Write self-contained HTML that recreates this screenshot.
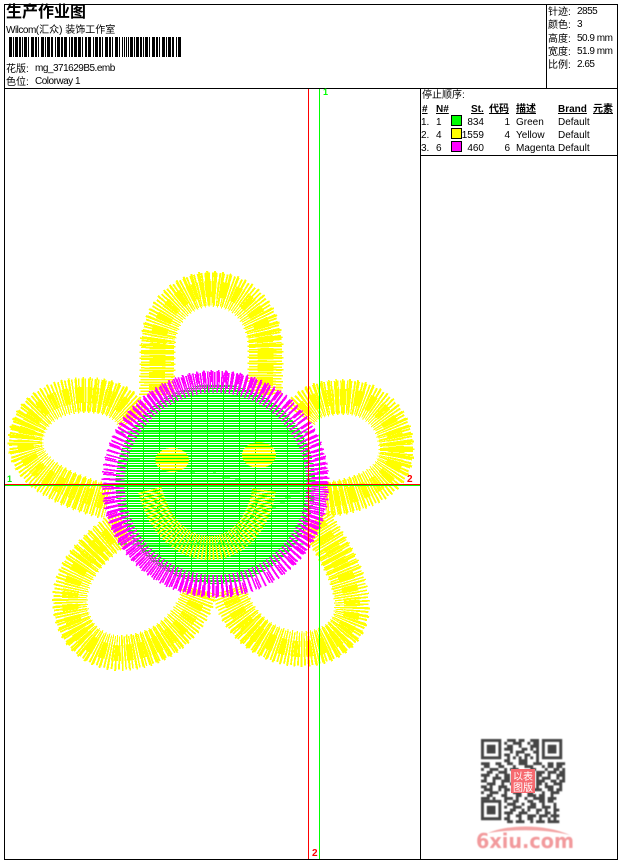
<!DOCTYPE html>
<html lang="zh"><head><meta charset="utf-8"><title>生产作业图</title>
<style>
html,body{margin:0;padding:0;background:#fff}
#p{position:relative;width:620px;height:860px;overflow:hidden;background:#fff;font:10px/12px "Liberation Sans","WenQuanYi Zen Hei","Noto Sans CJK SC",sans-serif;color:#000}
#p div{position:absolute;white-space:nowrap}
.l{position:absolute;background:#000}
.b{font-weight:bold;text-decoration:underline}
.s{width:9px;height:9px;border:1px solid #000}
.r{text-align:right}
.n{letter-spacing:-.5px}
svg{position:absolute;left:0;top:0}
</style></head><body><div id="p">
<svg width="620" height="860" viewBox="0 0 620 860">
<defs>
<pattern id="g" width="16" height="5" patternUnits="userSpaceOnUse"><rect width="16" height="2" y="0" fill="#0f0"/><rect width="16" height="1" y="3" fill="#0f0"/><rect x="15" width="1" height="5" fill="#0f0"/></pattern>
<pattern id="y" width="5" height="3" patternUnits="userSpaceOnUse"><rect width="5" height="2" fill="#ff0"/></pattern>
<filter id="bl"><feGaussianBlur stdDeviation=".45"/></filter>
<g id="pet" fill="none">
<path d="M157,395 L157.5,350 C157.5,310 185,289 211,289 C240,289 265.5,310 265.5,350 L265,395"/>
<path d="M135,420 C125,400 105,395 85,395 C50,395 25.5,415 25.5,443 C25.5,470 60,490 108,502"/>
<path d="M300,415 C310,400 325,397 345,397 C375,397 396.5,420 396.5,450 C396.5,480 365,495 325,500"/>
<path d="M125,525 C95,545 70,570 70,600 C70,635 95,653 120,653 C155,653 190,630 200,590"/>
<path d="M315,520 C330,545 352,575 352,607 C352,635 325,650 300,649 C270,648 240,630 228,590"/>
</g>
</defs>
<g shape-rendering="crispEdges">
<use href="#pet" stroke="#ff0" stroke-width="36" stroke-dasharray="1.5 4.5"/>
<use href="#pet" stroke="#ff0" stroke-width="33" stroke-dasharray="1.5 1.4"/>
<use href="#pet" stroke="#ff0" stroke-width="16" stroke-dasharray="1.5 .9"/>
<circle cx="215.5" cy="484" r="100" fill="#fff"/>
<circle cx="215.5" cy="484" r="100" fill="url(#g)"/>
<path d="M150,490 C160,530 185,548 210,548 C240,548 260,520 264,490" fill="none" stroke="#ff0" stroke-width="24" stroke-dasharray="1.5 1.8"/>
<path d="M155,500 C165,532 185,544 210,544 C235,544 252,522 258,500" fill="none" stroke="#0f0" stroke-width="1" stroke-dasharray="3 4"/>
<ellipse cx="172" cy="460" rx="17" ry="12" fill="url(#y)"/>
<ellipse cx="259" cy="455" rx="17" ry="13" fill="url(#y)"/>
<path d="M128 459h12M152 461h4M190 472h5M200 476h5M213 473h3M222 478h8M235 480h6M290 471h6M290 492h10M285 498h6M280 503h5M272 507h4M262 510h4M250 517h4M244 521h4M236 528h3M226 534h3M118 432h196M118 544h190" stroke="#0f0" stroke-width="1" fill="none"/>
<circle cx="215.5" cy="484" r="102" fill="none" stroke="#f0f" stroke-width="22" stroke-dasharray="1.5 3"/>
<circle cx="215.5" cy="484" r="104" fill="none" stroke="#f0f" stroke-width="16" stroke-dasharray="1.5 3" stroke-dashoffset="2.2"/>
<circle cx="215.5" cy="484" r="108" fill="none" stroke="#f0f" stroke-width="12" stroke-dasharray="1.5 5.5"/>
<rect x="308" y="89" width="1" height="770" fill="#f00"/>
<rect x="319" y="89" width="1" height="770" fill="#0f0"/>
<rect x="5" y="485" width="415" height="1" fill="#0f0"/>
<rect x="5" y="484" width="415" height="1" fill="#f00"/>
<path d="M9 47H181" stroke="#000" stroke-width="20" stroke-dasharray="3 1 1 1 3 1 2 1 1 1 3 1 1 2 3 1 2 1 1 2 3 1 1 1 3 1 2 2 1 1 3 1 2 1 3 2 1 1 2 1 3 1 3 1 1 2 2 1 3 2 1 1 3 1 2 1 1 2 3 1 2 1 1 2 3 1 1 2 1 1 1 1 1 1 1 1"/>
</g>
<g filter="url(#bl)">
<g transform="translate(481,739) scale(2.9)" fill="none" stroke="#444" stroke-width="1">
<path d="M.5 .5h6v6h-6zM21.5 .5h6v6h-6zM.5 21.5h6v6h-6z"/>
<path fill="#444" stroke="none" d="M2 2h3v3h-3zM23 2h3v3h-3zM2 23h3v3h-3z"/>
<path d="M9 .5h3m1 0h2m2 0h3M8 1.5h1m2 0h3m2 0h1m1 0h2M9 2.5h2m2 0h1m3 0h3M8 3.5h3m3 0h2m1 0h1m1 0h1M10 4.5h1m1 0h3m3 0h2M8 5.5h2m2 0h1m2 0h2m2 0h1M9 6.5h1m1 0h1m1 0h1m1 0h1m1 0h1m1 0h1M8 7.5h2m3 0h3m3 0h1M0 8.5h3m2 0h2m2 0h2m2 0h3m2 0h3m2 0h2m1 0h3M1 9.5h2m3 0h2m3 0h1m3 0h3m3 0h1m1 0h2m1 0h2M0 10.5h1m2 0h3m2 0h1m1 0h3m4 0h2m3 0h1m2 0h2m1 0h1M2 11.5h2m2 0h3m10 0h3m1 0h3m1 0h2M0 12.5h3m2 0h1m2 0h2m9 0h2m2 0h1m2 0h3M1 13.5h1m2 0h3m1 0h2m9 0h1m1 0h3m2 0h1m1 0h1M0 14.5h2m2 0h1m2 0h3m9 0h3m2 0h2m1 0h2M2 15.5h3m2 0h1m2 0h1m8 0h2m1 0h1m2 0h3M0 16.5h2m1 0h1m2 0h3m10 0h1m2 0h3m2 0h1M1 17.5h3m2 0h1m1 0h2m1 0h2m5 0h3m2 0h2m1 0h2M0 18.5h1m2 0h3m2 0h1m2 0h3m2 0h2m3 0h1m2 0h3M2 19.5h2m3 0h2m3 0h2m2 0h3m1 0h2m2 0h1M0 20.5h3m1 0h1m3 0h3m1 0h1m2 0h1m2 0h4m1 0h3M8 21.5h1m2 0h2m3 0h2m2 0h2m1 0h2M9 22.5h3m2 0h1m2 0h2m2 0h1m3 0h1M8 23.5h1m2 0h3m2 0h3m2 0h3m1 0h1M10 24.5h2m2 0h1m1 0h1m2 0h2m1 0h1m2 0h2M8 25.5h3m2 0h3m3 0h1m2 0h2m1 0h1M9 26.5h1m2 0h2m2 0h3m1 0h3m1 0h3M8 27.5h2m3 0h1m2 0h2m2 0h1m2 0h1m1 0h1M9 28.5h2m1 0h3m2 0h1m1 0h3m1 0h4"/>
</g>
<path d="M488,833 C510,824 545,824 570,835 C545,829 515,829 488,833Z" fill="#f3a4a4"/>
<text x="476" y="848" font-family="DejaVu Sans" font-weight="bold" font-size="20" fill="#f29a9c" textLength="98" lengthAdjust="spacingAndGlyphs">6xiu.com</text>
</g>
<rect x="511" y="769" width="24" height="24" fill="#f66a70"/>
<g font-family="WenQuanYi Zen Hei,Noto Sans CJK SC,sans-serif" font-size="10" fill="#fff">
<text x="513" y="780">以</text><text x="523" y="780">表</text><text x="513" y="791">图</text><text x="523" y="791">版</text>
</g>
</svg>
<span class="l" style="left:4px;top:4px;width:614px;height:1px"></span>
<span class="l" style="left:4px;top:88px;width:614px;height:1px"></span>
<span class="l" style="left:4px;top:859px;width:614px;height:1px"></span>
<span class="l" style="left:4px;top:4px;width:1px;height:856px"></span>
<span class="l" style="left:617px;top:4px;width:1px;height:856px"></span>
<span class="l" style="left:546px;top:4px;width:1px;height:85px"></span>
<span class="l" style="left:420px;top:88px;width:1px;height:772px"></span>
<span class="l" style="left:420px;top:155px;width:198px;height:1px"></span>

<div style="left:6px;top:4px;font-size:16px;line-height:18px;font-weight:bold">生产作业图</div>
<div style="left:6px;top:25px"><span class="n">Wilcom</span>(汇众) 装饰工作室</div>
<div style="left:6px;top:64px">花版:</div><div class="n" style="left:35px;top:63px">mg_371629B5.emb</div>
<div style="left:6px;top:77px">色位:</div><div class="n" style="left:35px;top:76px">Colorway 1</div>

<div style="left:548px;top:7px">针迹:</div><div class="n" style="left:577px;top:6px">2855</div>
<div style="left:548px;top:20px">颜色:</div><div class="n" style="left:577px;top:19px">3</div>
<div style="left:548px;top:34px">高度:</div><div class="n" style="left:577px;top:33px">50.9 mm</div>
<div style="left:548px;top:47px">宽度:</div><div class="n" style="left:577px;top:46px">51.9 mm</div>
<div style="left:548px;top:60px">比例:</div><div class="n" style="left:577px;top:59px">2.65</div>

<div style="left:422px;top:90px">停止顺序:</div>
<div class="b" style="left:422px;top:104px">#</div>
<div class="b" style="left:436px;top:104px">N#</div>
<div class="b" style="left:471px;top:104px">St.</div>
<div class="b" style="left:489px;top:104px">代码</div>
<div class="b" style="left:516px;top:104px">描述</div>
<div class="b" style="left:558px;top:104px">Brand</div>
<div class="b" style="left:593px;top:104px">元素</div>

<div style="left:421px;top:117px">1.</div><div style="left:436px;top:117px">1</div>
<div class="s" style="left:451px;top:115px;background:#0f0"></div>
<div class="r" style="left:454px;top:117px;width:30px">834</div>
<div class="r" style="left:490px;top:117px;width:20px">1</div>
<div style="left:516px;top:117px">Green</div><div style="left:558px;top:117px">Default</div>

<div style="left:421px;top:130px">2.</div><div style="left:436px;top:130px">4</div>
<div class="s" style="left:451px;top:128px;background:#ff0"></div>
<div class="r" style="left:454px;top:130px;width:30px">1559</div>
<div class="r" style="left:490px;top:130px;width:20px">4</div>
<div style="left:516px;top:130px">Yellow</div><div style="left:558px;top:130px">Default</div>

<div style="left:421px;top:143px">3.</div><div style="left:436px;top:143px">6</div>
<div class="s" style="left:451px;top:141px;background:#f0f"></div>
<div class="r" style="left:454px;top:143px;width:30px">460</div>
<div class="r" style="left:490px;top:143px;width:20px">6</div>
<div style="left:516px;top:143px">Magenta</div><div style="left:558px;top:143px">Default</div>

<div style="left:323px;top:87px;font-size:9px;line-height:10px;font-weight:bold;color:#0f0">1</div>
<div style="left:7px;top:474px;font-size:9px;line-height:10px;font-weight:bold;color:#0e0">1</div>
<div style="left:407px;top:474px;font-size:10px;line-height:11px;font-weight:bold;color:#f00">2</div>
<div style="left:312px;top:848px;font-size:10px;line-height:11px;font-weight:bold;color:#f00">2</div>
</div></body></html>
